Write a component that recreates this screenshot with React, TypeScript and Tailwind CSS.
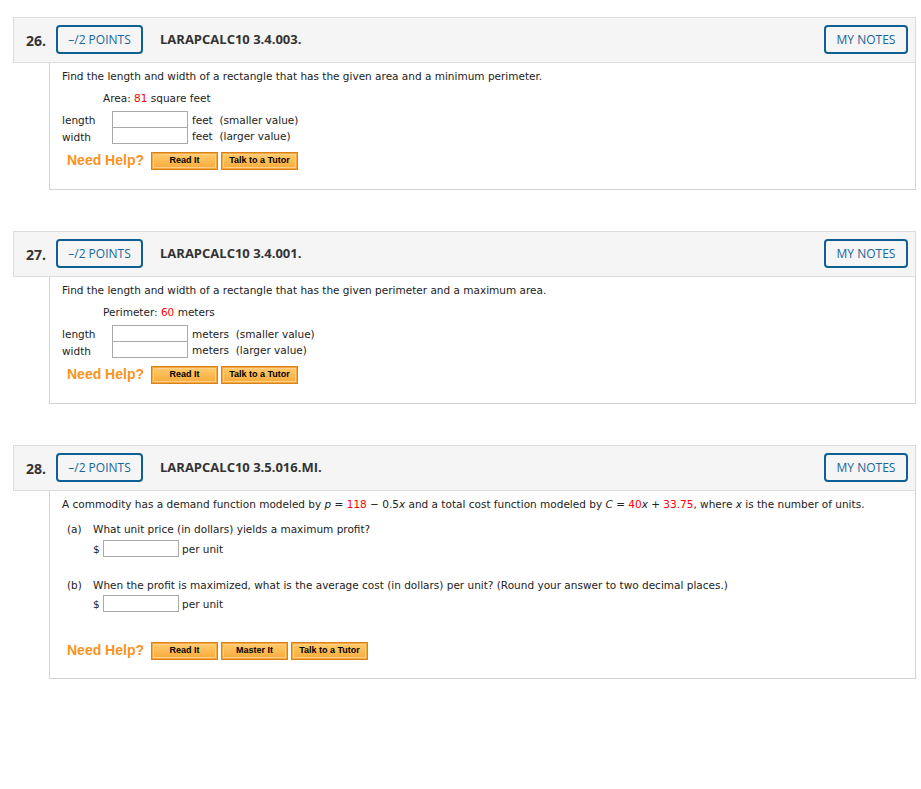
import React from "react";

const V = { fontFamily: "'DejaVu Sans', Verdana, sans-serif" };
const OS = { fontFamily: "'Open Sans', sans-serif" };
const AR = { fontFamily: "'Liberation Sans', Arial, sans-serif" };

function OrangeBtn({ label, w }: { label: string; w: string }) {
  return (
    <div className={`${w} h-[18px] border border-[#d9821c] bg-[#f6a73a] p-px`}>
      <div
        className="h-full w-full border border-[#ffd08a] bg-gradient-to-b from-[#ffc866] to-[#f9ae3f] flex items-center justify-center text-[9px] font-bold text-black leading-none"
        style={AR}
      >
        {label}
      </div>
    </div>
  );
}

function Header({ num, code }: { num: string; code: string }) {
  return (
    <div
      className="h-[46px] border border-[#dcdcdc] bg-[#f5f5f5] flex items-center pl-[12px] pr-[7px]"
      style={OS}
    >
      <div className="w-[30px] text-[14px] font-bold text-[#333] leading-none mt-[1px]">{num}</div>
      <div className="w-[87px] h-[29px] rounded-[4px] border-2 border-[#0f6092] flex items-center justify-center text-[12px] text-[#1b659a] mb-[1px]">
        –/2 POINTS
      </div>
      <div className="ml-[17px] text-[13px] font-bold text-[#333]">{code}</div>
      <div className="ml-auto w-[84px] h-[29px] rounded-[4px] border-2 border-[#0f6092] flex items-center justify-center text-[12px] text-[#1b659a] mb-[1px]">
        MY NOTES
      </div>
    </div>
  );
}

function NeedHelp({ buttons }: { buttons: { label: string; w: string }[] }) {
  return (
    <div className="flex items-center pl-[5px]">
      <div className="text-[14px] font-bold text-[#f7931e] mr-[7px]" style={AR}>
        Need Help?
      </div>
      <div className="flex gap-[3px]">
        {buttons.map((b) => (
          <OrangeBtn key={b.label} label={b.label} w={b.w} />
        ))}
      </div>
    </div>
  );
}

function Box() {
  return <div className="w-[76px] h-[17px] border border-[#aaa] bg-white" />;
}

function Red({ children }: { children: React.ReactNode }) {
  return <span className="text-[#ff0000]">{children}</span>;
}

function RectQuestion({
  num,
  code,
  intro,
  given,
  unit,
}: {
  num: string;
  code: string;
  intro: string;
  given: React.ReactNode;
  unit: string;
}) {
  return (
    <div>
      <Header num={num} code={code} />
      <div
        className="ml-[36px] h-[127px] border-x border-b border-[#d3d3d3] bg-white pl-[12px] pt-[6px] text-[10.5px] text-[#222]"
        style={V}
      >
        <div className="leading-[14px]">{intro}</div>
        <div className="leading-[14px] mt-[8px] pl-[41px]">{given}</div>
        <div className="mt-[6px] grid grid-cols-[50px_76px_auto] items-center leading-[14px]">
          <div className="pt-[1px]">length</div>
          <Box />
          <div className="pl-[4px]">{unit}&nbsp; (smaller value)</div>
          <div className="pt-[1px]">width</div>
          <div className="-mt-px">
            <Box />
          </div>
          <div className="pl-[4px]">{unit}&nbsp; (larger value)</div>
        </div>
        <div className="mt-[6px]">
          <NeedHelp
            buttons={[
              { label: "Read It", w: "w-[67px]" },
              { label: "Talk to a Tutor", w: "w-[77px]" },
            ]}
          />
        </div>
      </div>
    </div>
  );
}

export default function App() {
  return (
    <div className="w-[921px] min-h-[789px] bg-white pt-[17px] pl-[13px] pr-[5px]">
      <div className="flex flex-col gap-[41px]">
        <RectQuestion
          num="26."
          code="LARAPCALC10 3.4.003."
          intro="Find the length and width of a rectangle that has the given area and a minimum perimeter."
          given={
            <>
              Area: <Red>81</Red> square feet
            </>
          }
          unit="feet"
        />
        <RectQuestion
          num="27."
          code="LARAPCALC10 3.4.001."
          intro="Find the length and width of a rectangle that has the given perimeter and a maximum area."
          given={
            <>
              Perimeter: <Red>60</Red> meters
            </>
          }
          unit="meters"
        />
        <div>
          <Header num="28." code="LARAPCALC10 3.5.016.MI." />
          <div
            className="ml-[36px] h-[188px] border-x border-b border-[#d3d3d3] bg-white pl-[12px] pt-[6px] text-[10.5px] text-[#222]"
            style={V}
          >
            <div className="leading-[14px]">
              A commodity has a demand function modeled by <i>p</i> = <Red>118</Red> − 0.5<i>x</i> and a
              total cost function modeled by <i>C</i> = <Red>40</Red>
              <i>x</i> + <Red>33.75</Red>, where <i>x</i> is the number of units.
            </div>
            <div className="mt-[11px] pl-[5px] grid grid-cols-[26px_auto] leading-[14px]">
              <div>(a)</div>
              <div>What unit price (in dollars) yields a maximum profit?</div>
              <div />
              <div className="flex items-center gap-[3px] mt-[4px]">
                <span className="w-[7px]">$</span>
                <Box />
                <span>per unit</span>
              </div>
            </div>
            <div className="mt-[21px] pl-[5px] grid grid-cols-[26px_auto] leading-[14px]">
              <div>(b)</div>
              <div>
                When the profit is maximized, what is the average cost (in dollars) per unit? (Round your
                answer to two decimal places.)
              </div>
              <div />
              <div className="flex items-center gap-[3px] mt-[3px]">
                <span className="w-[7px]">$</span>
                <Box />
                <span>per unit</span>
              </div>
            </div>
            <div className="mt-[28px]">
              <NeedHelp
                buttons={[
                  { label: "Read It", w: "w-[67px]" },
                  { label: "Master It", w: "w-[67px]" },
                  { label: "Talk to a Tutor", w: "w-[77px]" },
                ]}
              />
            </div>
          </div>
        </div>
      </div>
    </div>
  );
}
